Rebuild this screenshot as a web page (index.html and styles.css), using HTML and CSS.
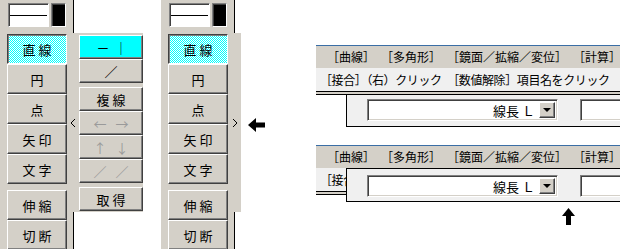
FILE: index.html
```html
<!doctype html>
<html>
    <head>
        <meta charset="utf-8">
        <title>作図ツール</title>
        <link rel="stylesheet" href="styles.css">
    </head>
    <body>
        <div class="stage">

            <!-- palette with the line flyout opened -->
            <div class="palette">
                <div class="swatches">
                    <div class="line-box"><span class="line"></span></div>
                    <div class="color-box"></div>
                </div>
                <div class="tools">
                    <div class="tool on">直線</div>
                    <div class="tool">円</div>
                    <div class="tool">点</div>
                    <div class="tool">矢印</div>
                    <div class="tool">文字</div>
                </div>
                <div class="tools">
                    <div class="tool">伸縮</div>
                    <div class="tool">切断</div>
                </div>
                <div class="flyout">
                    <div class="handle">
                        <svg width="6" height="10" viewBox="0 0 6 10"><polyline points="5,1 1,5 5,9" fill="none" stroke="#000" stroke-width="1"/></svg>
                    </div>
                    <div class="sub">
                        <div class="sub-group">
                            <div class="tool small lit">－ ｜</div>
                            <div class="tool small">／</div>
                        </div>
                        <div class="sub-group">
                            <div class="tool small">複線</div>
                            <div class="tool small off">← →</div>
                            <div class="tool small off">↑ ↓</div>
                            <div class="tool small off">／ ／</div>
                        </div>
                        <div class="sub-group">
                            <div class="tool small">取得</div>
                        </div>
                    </div>
                </div>
            </div>

            <!-- same palette, flyout closed -->
            <div class="palette second">
                <div class="swatches">
                    <div class="line-box"><span class="line"></span></div>
                    <div class="color-box"></div>
                </div>
                <div class="tools">
                    <div class="tool on">直線</div>
                    <div class="tool">円</div>
                    <div class="tool">点</div>
                    <div class="tool">矢印</div>
                    <div class="tool">文字</div>
                </div>
                <div class="tools">
                    <div class="tool">伸縮</div>
                    <div class="tool">切断</div>
                </div>
                <div class="flyout closed">
                    <div class="handle">
                        <svg width="6" height="10" viewBox="0 0 6 10"><polyline points="1,1 5,5 1,9" fill="none" stroke="#000" stroke-width="1"/></svg>
                    </div>
                </div>
            </div>

            <div class="mark-left">
                <svg width="17" height="14" viewBox="0 0 17 14"><polygon points="0,7 8,0 8,4.5 17,4.5 17,9.5 8,9.5 8,14" fill="#000"/></svg>
            </div>

            <div class="bars">
                <div class="bar">
                    <div class="menu-row"><span class="item">［曲線］</span><span class="item">［多角形］</span><span class="item">［鏡面／拡縮／変位］</span><span class="item">［計算］</span></div>
                    <div class="hint-row">［接合］（右）クリック　［数値解除］項目名をクリック</div>
                    <div class="rule"></div>
                    <div class="params">
                        <div class="combo"><span class="combo-text">線長 Ｌ</span><span class="drop"></span></div>
                        <div class="field"></div>
                    </div>
                </div>

                <div class="bar second-bar">
                    <div class="menu-row"><span class="item">［曲線］</span><span class="item">［多角形］</span><span class="item">［鏡面／拡縮／変位］</span><span class="item">［計算］</span></div>
                    <div class="hint-row">［接合］（右）クリック　［数値解除］項目名をクリック</div>
                    <div class="rule"></div>
                    <div class="params popup">
                        <div class="combo"><span class="combo-text">線長 Ｌ</span><span class="drop"></span></div>
                        <div class="field"></div>
                    </div>
                </div>

                <div class="mark-up">
                    <svg width="13" height="17" viewBox="0 0 13 17"><polygon points="6.5,0 13,8 9,8 9,17 4,17 4,8 0,8" fill="#000"/></svg>
                </div>
            </div>

        </div>
    </body>
</html>
```

FILE: styles.css
```css
body{
    margin: 0;
    background: #fff;
    font-family: 'Noto Sans CJK JP', sans-serif;
    color: #000;
}
.stage{
    display: flex;
    align-items: flex-start;
    width: 620px;
    height: 249px;
    overflow: hidden;
}

/* PALETTE */
.palette{
    position: relative;
    flex: none;
    width: 74px;
    height: 249px;
    box-sizing: border-box;
    padding-left: 7px;
    background: #d4d0c8;
    border-right: 1px solid #000;
}
.palette.second{
    margin-left: 87px;
}
.swatches{
    display: flex;
    gap: 2px;
    height: 34px;
    box-sizing: border-box;
    padding: 3px 0 0 1px;
}
.line-box, .color-box{
    height: 24px;
    box-sizing: border-box;
    border: 1px solid;
    border-color: #808080 #fff #fff #808080;
    box-shadow: inset 1px 1px #404040;
}
.line-box{
    width: 41px;
    background: #fff;
    display: flex;
    align-items: center;
    justify-content: center;
}
.line{
    display: block;
    width: 37px;
    height: 1px;
    background: #000;
}
.color-box{
    width: 15px;
    background: #000;
}

.tools{
    width: 60px;
    margin-bottom: 6px;
}
.tool{
    height: 30px;
    box-sizing: border-box;
    display: flex;
    align-items: center;
    justify-content: center;
    padding-left: 3px;
    font-size: 13px;
    letter-spacing: 3px;
    background: #d4d0c8;
    border: 1px solid;
    border-color: #fff #404040 #404040 #fff;
    box-shadow: inset -1px -1px #808080;
    white-space: nowrap;
}
/* pressed tool: 1px cyan / white checker, kept in step with the screen grid */
.tool.on{
    border-color: #404040 #fff #fff #404040;
    box-shadow: inset 1px 1px #808080;
    background: repeating-conic-gradient(#00ffff 0 25%, #fff 0 50%) 0 0 / 2px 2px;
}
.second .tool.on{
    background-position: 1px 0;
}
.tool.small{
    height: 24px;
}
.tool.lit{
    background: #00ffff;
    letter-spacing: 1px;
}
.tool.off{
    color: #9a9a9a;
}

/* FLYOUT */
.flyout{
    position: absolute;
    left: 67px;
    top: 33px;
    width: 76px;
    height: 179px;
    display: flex;
    background: #d4d0c8;
}
.flyout.closed{
    width: 13px;
}
.handle{
    width: 12px;
    flex: none;
    display: flex;
    align-items: center;
    justify-content: center;
}
.closed .handle{
    width: 13px;
}
.sub{
    width: 64px;
    padding-top: 2px;
    display: flex;
    flex-direction: column;
    gap: 4px;
}

/* ARROWS */
.mark-left{
    margin: 118px 0 0 13px;
    line-height: 0;
}
.mark-up{
    margin: 13px 0 0 246px;
    line-height: 0;
}

/* COMMAND BARS */
.bars{
    flex: none;
    width: 330px;
    margin: 45px 0 0 51px;
}
.bar{
    position: relative;
    border-top: 1px solid #3a6ea5;
    font-size: 12px;
}
.second-bar{
    margin-top: 18px;
}
.menu-row{
    height: 22px;
    line-height: 22px;
    padding-left: 11px;
    background: #d4d0c8;
    white-space: nowrap;
}
.menu-row .item{
    margin-right: 12px;
}
.hint-row{
    height: 23px;
    line-height: 23px;
    padding-left: 4px;
    letter-spacing: -0.4px;
    background: #f0f0f0;
    white-space: nowrap;
}
.rule{
    height: 2px;
    background: #d4d0c8;
    border-top: 1px solid #000;
    border-bottom: 1px solid #000;
}
.params{
    height: 32px;
    margin-left: 30px;
    box-sizing: border-box;
    padding: 4px 0 0 20px;
    display: flex;
    gap: 22px;
    background: #f0f0f0;
    border-left: 1px solid #000;
    border-bottom: 1px solid #000;
}
.popup{
    position: absolute;
    left: 0;
    right: 0;
    top: 22px;
    height: 34px;
    padding-top: 6px;
    border-top: 1px solid #000;
}
.combo, .field{
    height: 22px;
    box-sizing: border-box;
    background: #fff;
    border: 1px solid;
    border-color: #808080 #fff #fff #808080;
    box-shadow: inset 1px 1px #404040, inset -1px -1px #d4d0c8;
}
.combo{
    width: 191px;
    flex: none;
    display: flex;
    align-items: center;
    justify-content: flex-end;
    padding-right: 2px;
}
.combo-text{
    font-size: 13px;
    margin-right: 4px;
}
.drop{
    position: relative;
    width: 16px;
    height: 16px;
    box-sizing: border-box;
    background: #d4d0c8;
    border: 1px solid;
    border-color: #fff #404040 #404040 #fff;
    box-shadow: inset -1px -1px #808080;
}
.drop::after{
    content: "";
    position: absolute;
    left: 3px;
    top: 5px;
    border-left: 4px solid transparent;
    border-right: 4px solid transparent;
    border-top: 4px solid #000;
}
.field{
    width: 80px;
    flex: none;
}
```
